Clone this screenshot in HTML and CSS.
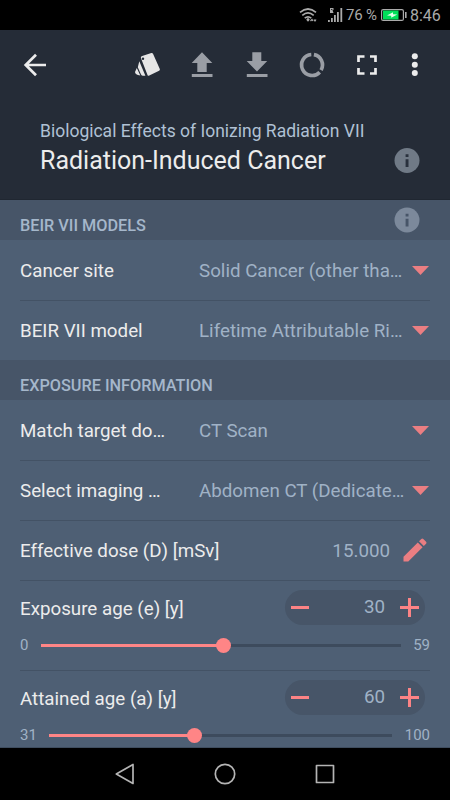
FILE: index.html
```html
<!DOCTYPE html>
<html lang="en">
<head>
<meta charset="utf-8">
<title>Radiation-Induced Cancer</title>
<link rel="stylesheet" href="styles.css">
</head>
<body>
<div class="statusbar">
  <svg class="wifi" viewBox="0 0 18 16" fill="none" stroke="#aaa" stroke-width="1.7"><path d="M1 5.3Q9 -1.3 17 5.3M3.3 8.3Q9 3.5 14.7 8.3M5.7 11.2Q9 8.6 12.3 11.2"/><path d="M9 10.8l1.8 2-1.8 2-1.8-2z" fill="#aaa" stroke="none"/><path d="M11.5 14l1.5-1.5 1 1.5M15 12.5l1 1.5 1-1.5" stroke-width="1.2"/></svg>
  <svg class="signal" viewBox="0 0 15 16" fill="#aaa"><path d="M0 13h1.8v2H0zM3 11h1.8v4H3zM6 8h1.8v7H6zM9 5h1.8v10H9zM12.4 1h1.8v14h-1.8z"/><path d="M2 1h3.5v2L4.5 3.2 5.5 6H2zM3 2v.8h1.4V2z"/></svg>
  <span class="percent">76 %</span>
  <svg class="battery" viewBox="0 0 26 12"><rect x=".6" y=".6" width="21.8" height="10.8" rx="1.5" fill="none" stroke="#aaa" stroke-width="1.2"/><rect x="2" y="1.500" width="15.5" height="9" fill="#00e05a"/><path d="M6 6.5l6-3.2v2l4.2.2-6 3.2V6.8z" fill="#e4ffe9"/><path d="M24 3h1.6v6H24z" fill="#aaa"/></svg>
  <span class="clock">8:46</span>
</div>
<header class="header">
  <nav class="toolbar">
    <svg class="icon back" viewBox="0 0 30 30" fill="none" stroke="#ececec" stroke-width="2.7"><path d="M26 15H6M16 4.7L5.7 15 16 25.3"/></svg>
    <svg class="icon" viewBox="0 0 30 30" fill="#e6e6e6"><path d="M10.2 5.9L19.3 3q1.2-.3 1.7.8l6.8 15.3q.5 1.2-.7 1.7L17.3 25.6q-1.3.5-1.8-.7L8.9 8q-.5-1.5 1.3-2.1z"/><path d="M7.300 11.200L13.400 25.800H11Q9.700 25.800 9 24.500L5.800 17.300zM4.800 18L8.300 25.600Q3 24.900 3 22z"/><circle cx="11" cy="8.800" r="1.200" fill="#252c37"/></svg>
    <svg class="icon" viewBox="0 0 30 30" fill="#9a9ea5"><path d="M15 2.300L25.300 13H19.700v9H10.300v-9H4.700zM4.800 24h20.700v3H4.800z"/></svg>
    <svg class="icon" viewBox="0 0 30 30" fill="#9a9ea5"><path d="M10.300 2.300h9V11h5.900L15 21.500 4.700 11h5.600zM4.800 24h20.700v3H4.800z"/></svg>
    <svg class="icon" viewBox="0 0 30 30" fill="none" stroke="#9a9ea5" stroke-width="3.700"><path d="M14.300 4.500A10.500 10.500 0 1 0 22.700 22.200M16.900 4.600A10.500 10.500 0 0 1 24.100 20.100"/></svg>
    <svg class="icon" viewBox="0 0 30 30" fill="none" stroke="#ececec" stroke-width="2.700"><path d="M6.500 12V6.500h6M18 6.500h5.500V12M23.500 18v5.500H18M12.500 23.500h-6V18"/></svg>
    <svg class="icon dots" viewBox="0 0 30 30" fill="#ececec"><circle cx="14.800" cy="6.300" r="3"/><circle cx="14.800" cy="14.800" r="3"/><circle cx="14.800" cy="23.100" r="3"/></svg>
  </nav>
  <div class="heading">
    <div class="titles">
      <p class="subtitle">Biological Effects of Ionizing Radiation VII</p>
      <h1 class="title">Radiation-Induced Cancer</h1>
    </div>
    <svg class="info" viewBox="0 0 26 26"><circle cx="13" cy="13.500" r="12.500" fill="#707a86"/><path d="M11.600 7.200h2.900v2.700h-2.900zM11.600 12.200h2.900v7.800h-2.900z" fill="#29313d"/></svg>
  </div>
</header>
<main class="content">
  <h2 class="section">BEIR VII MODELS
    <svg class="info" viewBox="0 0 26 26"><circle cx="13" cy="13" r="12.500" fill="#7c899b"/><path d="M11.600 6.700h2.900v2.700h-2.900zM11.600 11.700h2.900v7.800h-2.900z" fill="#475568"/></svg>
  </h2>
  <div class="row"><span class="label">Cancer site</span><span class="value">Solid Cancer (other tha…</span><i class="caret"></i></div>
  <div class="row"><span class="label">BEIR VII model</span><span class="value">Lifetime Attributable Ri…</span><i class="caret"></i></div>
  <h2 class="section">EXPOSURE INFORMATION</h2>
  <div class="row"><span class="label">Match target do…</span><span class="value">CT Scan</span><i class="caret"></i></div>
  <div class="row"><span class="label">Select imaging …</span><span class="value">Abdomen CT (Dedicate…</span><i class="caret"></i></div>
  <div class="row"><span class="label wide">Effective dose (D) [mSv]</span><span class="value number">15.000</span>
    <svg class="pencil" viewBox="0 0 24 24" fill="#ea7e82"><path d="M.5 18.700L14.800 4.400l4.800 4.800L5.300 23.500H.5zM16 3.200L18.300.9q1-.9 2 0l2.800 2.800q.9 1 0 2L20.800 8z"/></svg>
  </div>
  <div class="slider-row">
    <div class="slider-head"><span class="label wide">Exposure age (e) [y]</span>
      <div class="stepper"><i class="minus"></i><span class="count">30</span><i class="plus"></i></div>
    </div>
    <div class="slider"><span class="bound">0</span><div class="track first"><div class="fill" style="width:50.5%"></div></div><span class="bound">59</span></div>
  </div>
  <div class="slider-row">
    <div class="slider-head"><span class="label wide">Attained age (a) [y]</span>
      <div class="stepper"><i class="minus"></i><span class="count">60</span><i class="plus"></i></div>
    </div>
    <div class="slider"><span class="bound">31</span><div class="track second"><div class="fill" style="width:42.4%"></div></div><span class="bound">100</span></div>
  </div>
</main>
<footer class="navbar">
  <svg viewBox="0 0 24 24" fill="none" stroke="#b4b4b4" stroke-width="1.700" stroke-linejoin="round"><path d="M20 2.500v19L3.300 12z"/></svg>
  <svg viewBox="0 0 24 24" fill="none" stroke="#b4b4b4" stroke-width="1.700"><circle cx="12" cy="12" r="9.700"/></svg>
  <svg viewBox="0 0 24 24" fill="none" stroke="#b4b4b4" stroke-width="1.700" stroke-linejoin="round"><path d="M3.500 3.500h17v17h-17z"/></svg>
</footer>
</body>
</html>
```
FILE: styles.css
```css
* { box-sizing: border-box; }
body {
  margin: 0;
  width: 450px;
  height: 800px;
  overflow: hidden;
  display: flex;
  flex-direction: column;
  background: #4e5f74;
  color: #ececec;
  font-family: Roboto, "Liberation Sans", sans-serif;
}
h1, h2, p { margin: 0; font-weight: 400; }
svg { display: block; flex: none; }
.statusbar {
  height: 30px;
  flex: none;
  display: flex;
  align-items: center;
  justify-content: flex-end;
  background: #000;
  color: #aaa;
  font-size: 15px;
}
.wifi { width: 18px; height: 16px; margin-right: 11px; }
.signal { width: 15px; height: 16px; margin-right: 3px; }
.percent { width: 31px; white-space: nowrap; margin-right: 4px; line-height: 28px; letter-spacing: -0.2px; }
.battery { width: 26px; height: 12px; margin-right: 3px; }
.clock { width: 40px; font-size: 16px; line-height: 30px; padding-top: 2px; }
.header {
  height: 170px;
  flex: none;
  background: #252c37;
  border-bottom: 1px solid #202731;
}
.toolbar {
  height: 70px;
  padding: 0 20px;
  display: flex;
  align-items: center;
  gap: 25px;
}
.icon { width: 30px; height: 30px; }
.back { margin-right: auto; }
.dots { margin-left: -7px; }
.heading {
  display: flex;
  justify-content: space-between;
  padding: 18px 30px 0 40px;
}
.titles { padding-top: 1px; }
.subtitle { font-size: 17.5px; line-height: 24px; color: #b0c1d4; white-space: nowrap; }
.title { font-size: 25px; line-height: 36px; white-space: nowrap; }
.info { width: 26px; height: 26px; }
.heading .info { margin-top: 29px; }
.content { height: 548px; flex: none; overflow: hidden; border-bottom: 1px solid #3f4d5f; }
.section {
  height: 40px;
  padding: 0 30px 0 20px;
  display: flex;
  justify-content: space-between;
  background: #475568;
  color: #a5b7cb;
  font-size: 16.25px;
  font-weight: 500;
  line-height: 52px;
}
.section .info { margin-top: 7px; }
.row {
  position: relative;
  height: 60px;
  padding: 0 20px;
  display: flex;
  align-items: center;
  font-size: 18.75px;
  line-height: 58px;
}
.row + .row::before,
.slider-row::before {
  content: "";
  position: absolute;
  left: 20px;
  right: 20px;
  top: 0;
  height: 1px;
  background: #435265;
}
.label { width: 179px; flex: none; white-space: nowrap; }
.row .label, .row .value { padding-top: 2px; }
.label.wide { width: 250px; }
.value { flex: 1; color: #a0b2c6; white-space: nowrap; }
.number { text-align: right; margin-right: 13px; }
.caret {
  width: 17px;
  height: 9px;
  margin: 1px 1px 0 0;
  background: #ea7e82;
  clip-path: polygon(0 0, 100% 0, 50% 100%);
}
.pencil { width: 24px; height: 24px; margin-right: 3px; }
.slider-row { position: relative; height: 90px; padding: 0 20px; font-size: 18.75px; }
.slider-head { display: flex; justify-content: space-between; padding: 10px 5px 0 0; line-height: 38px; height: 46px; }
.stepper {
  width: 140px;
  height: 35px;
  padding: 0 6px;
  display: flex;
  align-items: center;
  border-radius: 18px;
  background: #475568;
  color: #a0b2c6;
}
.count { flex: 1; text-align: right; padding-right: 15px; line-height: 37px; }
.minus { width: 18px; height: 3px; background: #fc8385; }
.plus {
  width: 19px;
  height: 19px;
  background: linear-gradient(#fc8385, #fc8385) 50% 50% / 19px 3px no-repeat,
    linear-gradient(#fc8385, #fc8385) 50% 50% / 3px 19px no-repeat;
}
.slider {
  display: flex;
  align-items: center;
  justify-content: space-between;
  margin-top: 9px;
  height: 20px;
  color: #a0b2c6;
  font-size: 15px;
}
.track { height: 3px; background: #3d4b5d; }
.track.first { width: 360px; margin-left: auto; margin-right: 12px; }
.track.second { width: 343px; margin-left: auto; margin-right: 13px; }
.fill { position: relative; height: 3px; background: #ff8586; }
.fill::after {
  content: "";
  position: absolute;
  right: -8px;
  top: -6px;
  width: 15px;
  height: 15px;
  border-radius: 50%;
  background: #ff8586;
}
.navbar {
  height: 52px;
  flex: none;
  display: flex;
  align-items: center;
  justify-content: center;
  gap: 76px;
  background: #000;
}
.navbar svg { width: 24px; height: 24px; }
```
